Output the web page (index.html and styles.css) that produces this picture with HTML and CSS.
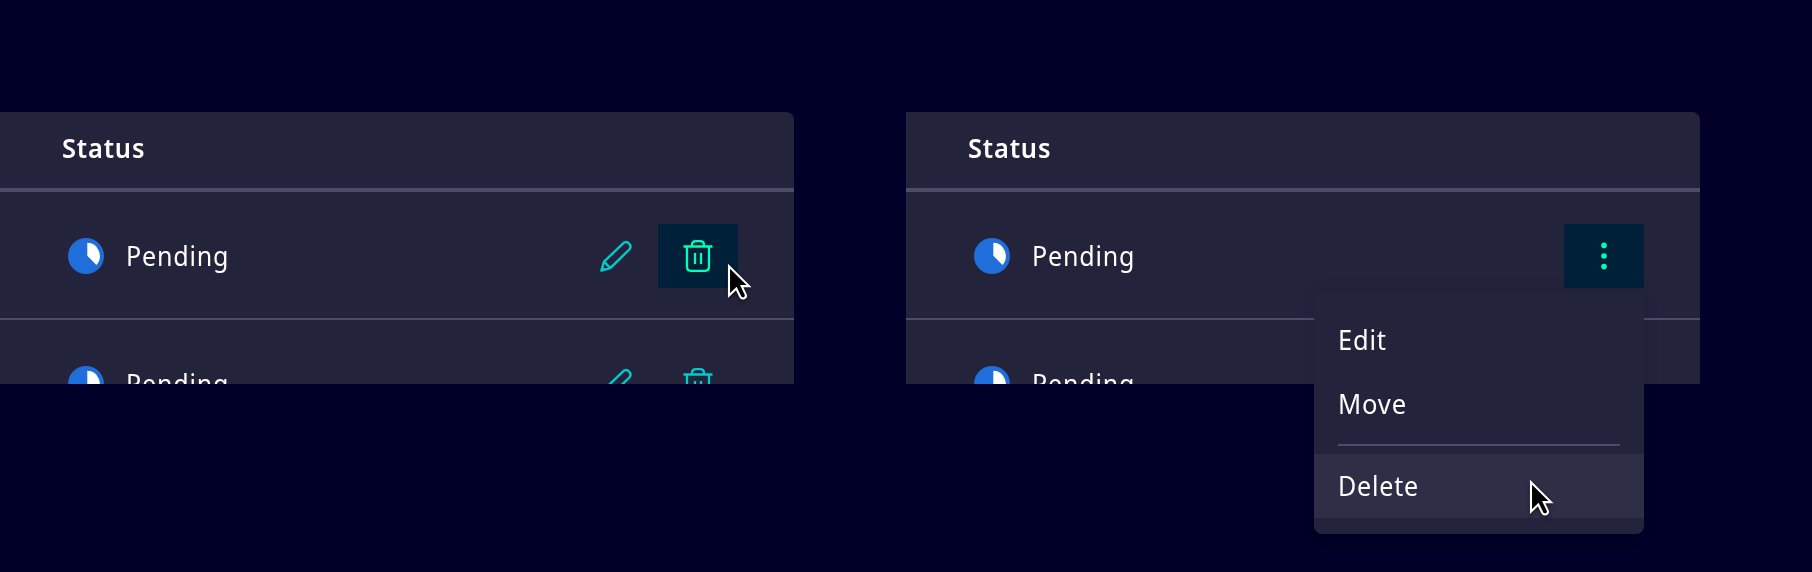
FILE: index.html
```html
<!DOCTYPE html>
<html lang="en">
<head>
<meta charset="utf-8">
<title>Table actions</title>
<link rel="stylesheet" href="styles.css">
</head>
<body>
<svg class="defs" aria-hidden="true">
  <symbol id="pending" viewBox="0 0 36 36">
    <circle cx="18" cy="18" r="18" fill="#206ed9"/>
    <path d="M19.3 4.7A12.4 13.3 0 0 1 28.4 27.1L19.3 17.7Z" fill="#fff"/>
  </symbol>
  <symbol id="pencil" viewBox="0 0 32 32">
    <path d="M1.4 30.6L4 21.7L23.7 2.8A4.5 4.5 0 0 1 29.8 9L10.3 28.1ZM4 21.7L10.3 28.1M2.2 27.7L4.4 29.8" fill="none" stroke="currentColor" stroke-width="2.4" stroke-linejoin="round"/>
  </symbol>
  <symbol id="trash" viewBox="0 0 32 32">
    <path d="M1.5 6.5H30.5M5 6.5V27.3Q5 30.8 8.7 30.8H23.3Q27 30.8 27 27.3V6.5M10 6.5V5Q10 1.2 14 1.2H18Q22 1.2 22 5V6.5M13 13V24M19 13V24" fill="none" stroke="currentColor" stroke-width="2.3"/>
  </symbol>
  <symbol id="dots" viewBox="0 0 32 32">
    <g fill="currentColor"><circle cx="16" cy="5.4" r="2.8"/><circle cx="16" cy="16" r="2.8"/><circle cx="16" cy="26.6" r="2.8"/></g>
  </symbol>
  <symbol id="cursor" viewBox="0 0 28 40">
    <path d="M3 4.2V33.6L10.3 26.6L14.3 34.8C15.3 36.6 17 36.7 18.5 36C20 35.2 20.3 33.8 19.6 32.4L15.7 24.1H23Z" fill="#000" stroke="#fff" stroke-width="2.1"/>
  </symbol>
</svg>
<main class="stage">
  <section class="example">
    <div class="table">
      <div class="head"><span class="label">Status</span></div>
      <div class="row">
        <svg class="state"><use href="#pending"/></svg><span class="text">Pending</span>
        <div class="actions">
          <button class="action"><svg class="icon"><use href="#pencil"/></svg></button>
          <button class="action active"><svg class="icon"><use href="#trash"/></svg><svg class="cursor cursor-trash"><use href="#cursor"/></svg></button>
        </div>
      </div>
      <div class="row">
        <svg class="state"><use href="#pending"/></svg><span class="text">Pending</span>
        <div class="actions">
          <button class="action"><svg class="icon"><use href="#pencil"/></svg></button>
          <button class="action"><svg class="icon"><use href="#trash"/></svg></button>
        </div>
      </div>
    </div>
  </section>
  <section class="example">
    <div class="table">
      <div class="head"><span class="label">Status</span></div>
      <div class="row">
        <svg class="state"><use href="#pending"/></svg><span class="text">Pending</span>
        <div class="actions">
          <button class="action active"><svg class="icon"><use href="#dots"/></svg></button>
        </div>
      </div>
      <div class="row">
        <svg class="state"><use href="#pending"/></svg><span class="text">Pending</span>
      </div>
    </div>
    <div class="menu">
      <div class="item"><span class="text edit">Edit</span></div>
      <div class="item"><span class="text move">Move</span></div>
      <div class="divider"></div>
      <div class="item hover"><span class="text">Delete</span><svg class="cursor cursor-delete"><use href="#cursor"/></svg></div>
    </div>
  </section>
</main>
</body>
</html>
```
FILE: styles.css
```css
* { box-sizing: border-box; }
body {
  margin: 0;
  background: #000028;
  color: #fff;
  font: 27.5px/40px "Noto Sans", "Open Sans", sans-serif;
  letter-spacing: .9px;
}
.defs { position: absolute; width: 0; height: 0; }
.stage {
  display: flex;
  gap: 112px;
  height: 572px;
  padding-top: 112px;
  overflow: hidden;
}
.example { position: relative; width: 794px; }
.table {
  height: 272px;
  overflow: hidden;
  background: #23233c;
  border-radius: 0 8px 0 0;
}
.head {
  height: 80px;
  padding: 16px 0 0 62px;
  border-bottom: 4px solid #4c4c68;
}
.label {
  display: inline-block;
  font-weight: 600;
  transform: scaleX(.925);
  transform-origin: left;
}
.row {
  display: flex;
  align-items: center;
  height: 128px;
  padding: 2px 56px 0 68px;
  border-bottom: 2px solid #4c4c68;
}
.state { width: 36px; height: 36px; margin-right: 22px; flex: none; }
.text {
  display: inline-block;
  font-weight: 400;
  transform: scaleX(.91);
  transform-origin: left;
}
.edit { transform: scaleX(.925); }
.move { transform: scaleX(.93); }
.actions { display: flex; gap: 2px; margin-left: auto; }
.action {
  position: relative;
  display: flex;
  align-items: center;
  justify-content: center;
  width: 80px;
  height: 64px;
  padding: 0;
  border: 0;
  background: transparent;
  color: #00cccc;
}
.active { background: #001f39; color: #00ffb9; }
.icon { width: 32px; height: 32px; }
.menu {
  position: absolute;
  top: 180px;
  left: 408px;
  width: 330px;
  padding: 16px 0;
  border-radius: 8px;
  background: #23233c;
  box-shadow: 0 0 16px rgba(0, 0, 0, .12);
}
.item {
  position: relative;
  height: 64px;
  padding: 12px 24px;
}
.hover { background: #2e2e46; }
.divider { height: 2px; margin: 8px 24px; background: #4c4c68; }
.cursor {
  position: absolute;
  width: 28px;
  height: 40px;
  overflow: visible;
  filter: drop-shadow(0 2px 2px rgba(0, 0, 0, .45));
}
.cursor-trash { left: 68px; top: 38px; }
.cursor-delete { left: 214px; top: 24px; }
```
